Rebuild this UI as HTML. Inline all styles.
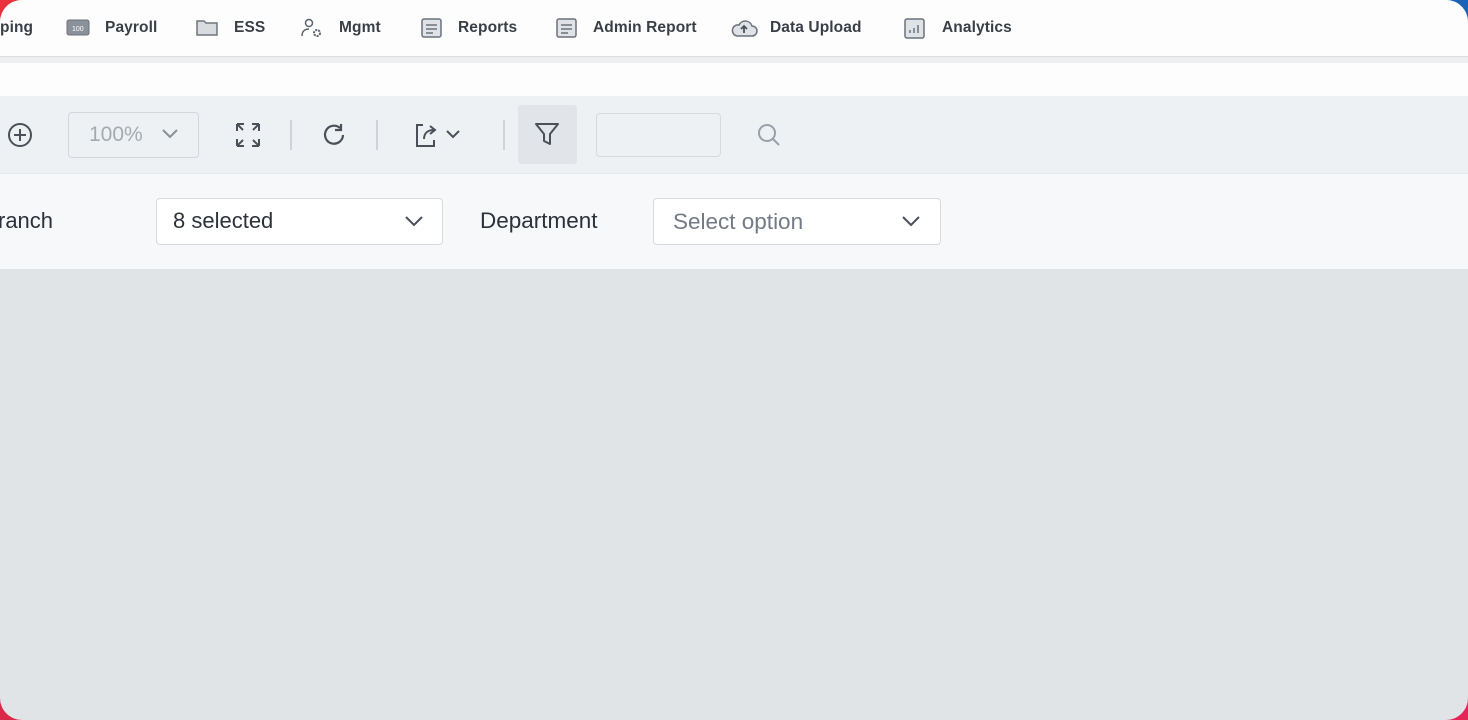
<!DOCTYPE html>
<html><head><style>
body{margin:0;width:1468px;height:720px;overflow:hidden;background:linear-gradient(135deg,#e8303a 0%,#d8204a 50%,#1d5fb0 100%);font-family:"Liberation Sans",sans-serif;}
.win{position:absolute;left:0;top:0;width:1468px;height:720px;border-radius:22px;overflow:hidden;background:#e1e4e7;}
.bgtr{position:absolute;right:0;top:0;width:40px;height:40px;background:#1b63b6}
.bgbr{position:absolute;right:0;bottom:0;width:40px;height:40px;background:#e52458}
.bgtl{position:absolute;left:0;top:0;width:40px;height:40px;background:#e8313a}
.bgbl{position:absolute;left:0;bottom:0;width:40px;height:40px;background:#d92848}
.nav{position:absolute;left:0;top:0;width:1468px;height:56px;background:#fdfdfd;border-bottom:1px solid #dcdee0;box-shadow:0 2px 4px rgba(0,0,0,.06)}
.g{position:absolute;top:57px;height:6px;width:1468px;background:#eeeff0}
.w2{position:absolute;top:63px;height:33px;width:1468px;background:#fdfdfd}
.nv{position:absolute;top:19px;font-size:15.5px;color:#3a3f47;font-weight:bold;letter-spacing:.1px}
.ic{position:absolute;top:17px}
.tb{position:absolute;top:96px;height:77px;width:1468px;background:#eef1f4;border-bottom:1px solid #e6e8eb}
.fr{position:absolute;top:174px;height:95px;width:1468px;background:#f7f8fa}
.box{position:absolute;border:1px solid #d6d9dd;border-radius:4px;background:#fff}
.t{position:absolute;font-size:22px;color:#2d323a}
</style></head><body>
<div class="bgtl"></div><div class="bgtr"></div><div class="bgbr"></div><div class="bgbl"></div>
<div class="win">
<div class="nav">
<span class="nv" style="left:0">ping</span>
<svg class="ic" style="left:66px" width="24" height="20"><rect x="1" y="3" width="22" height="15" rx="2" fill="#8a919b" stroke="#6b727c"/><text x="6" y="14" font-size="7" fill="#fff" font-family="Liberation Sans">100</text></svg>
<span class="nv" style="left:105px">Payroll</span>
<svg class="ic" style="left:195px" width="24" height="20"><path d="M2 4h7l2 2h11v12H2z" fill="#d8dbe0" stroke="#70767f" stroke-width="1.5"/></svg>
<span class="nv" style="left:234px">ESS</span>
<svg class="ic" style="left:300px" width="26" height="22"><circle cx="9" cy="6" r="3.5" fill="none" stroke="#5b626c" stroke-width="1.5"/><path d="M2 19c0-5 3-7 7-7" fill="none" stroke="#5b626c" stroke-width="1.5"/><circle cx="17" cy="16" r="3" fill="none" stroke="#5b626c" stroke-width="2" stroke-dasharray="2 1"/></svg>
<span class="nv" style="left:339px">Mgmt</span>
<svg class="ic" style="left:420px" width="24" height="22"><rect x="2" y="2" width="19" height="18" rx="2" fill="#dfe2e6" stroke="#6b727c" stroke-width="1.5"/><path d="M6 8h11M6 12h11M6 16h7" stroke="#6b727c" stroke-width="1.5"/></svg>
<span class="nv" style="left:458px">Reports</span>
<svg class="ic" style="left:555px" width="24" height="22"><rect x="2" y="2" width="19" height="18" rx="2" fill="#dfe2e6" stroke="#6b727c" stroke-width="1.5"/><path d="M6 8h11M6 12h11M6 16h7" stroke="#6b727c" stroke-width="1.5"/></svg>
<span class="nv" style="left:593px">Admin Report</span>
<svg class="ic" style="left:729px" width="30" height="22"><path d="M8 19h15a5 5 0 0 0 0-10 7 7 0 0 0-13-1 5 5 0 0 0-2 11z" fill="#dfe2e6" stroke="#6b727c" stroke-width="1.5"/><path d="M15 16v-6M12 12l3-3 3 3" stroke="#4b525c" stroke-width="1.8" fill="none"/></svg>
<span class="nv" style="left:770px">Data Upload</span>
<svg class="ic" style="left:903px" width="24" height="22"><rect x="2" y="2" width="19" height="19" rx="2" fill="#dfe2e6" stroke="#6b727c" stroke-width="1.5"/><path d="M7 16v-3M11 16v-5M15 16v-8" stroke="#6b727c" stroke-width="1.5"/></svg>
<span class="nv" style="left:942px">Analytics</span>
</div>
<div class="g"></div><div class="w2"></div>
<div class="tb">
<svg style="position:absolute;left:6px;top:25px" width="28" height="28"><circle cx="14" cy="14" r="11" fill="none" stroke="#4b5058" stroke-width="2"/><path d="M14 8v12M8 14h12" stroke="#4b5058" stroke-width="2"/></svg>
<div class="box" style="left:68px;top:16px;width:129px;height:44px;background:#eef1f4;border-color:#d3d7dc"></div>
<span class="t" style="left:89px;top:27px;color:#a5aab1;font-size:21px">100%</span>
<svg style="position:absolute;left:161px;top:31px" width="18" height="12"><path d="M2 3l7 7 7-7" fill="none" stroke="#8a9098" stroke-width="2"/></svg>
<svg style="position:absolute;left:234px;top:25px" width="28" height="28"><path d="M3 3h7M3 3v7M3 3l6 6M25 3h-7M25 3v7M25 3l-6 6M3 25h7M3 25v-7M3 25l6-6M25 25h-7M25 25v-7M25 25l-6-6" stroke="#4b5058" stroke-width="2" fill="none"/></svg>
<div style="position:absolute;left:290px;top:24px;width:2px;height:30px;background:#cfd3d8"></div>
<svg style="position:absolute;left:320px;top:25px" width="28" height="28"><path d="M23 14a9 9 0 1 1-3-7" fill="none" stroke="#4b5058" stroke-width="2.2"/><path d="M21 3v6h-6" fill="none" stroke="#4b5058" stroke-width="2.2"/></svg>
<div style="position:absolute;left:376px;top:24px;width:2px;height:30px;background:#cfd3d8"></div>
<svg style="position:absolute;left:413px;top:24px" width="52" height="30"><path d="M10 5H4v21h17v-6" fill="none" stroke="#4b5058" stroke-width="2"/><path d="M11 19c0-6 4-9 10-9M17 6l5 4-5 4" fill="none" stroke="#4b5058" stroke-width="2"/><path d="M34 11l6 6 6-6" fill="none" stroke="#4b5058" stroke-width="2"/></svg>
<div style="position:absolute;left:503px;top:24px;width:2px;height:30px;background:#cfd3d8"></div>
<div style="position:absolute;left:518px;top:9px;width:59px;height:59px;background:#e1e4e8;border-radius:3px"></div>
<svg style="position:absolute;left:533px;top:25px" width="28" height="26"><path d="M3 3h22l-8 10v10l-6-3v-7z" fill="none" stroke="#4b5058" stroke-width="2" stroke-linejoin="round"/></svg>
<div class="box" style="left:596px;top:17px;width:123px;height:42px;background:#eef1f4"></div>
<svg style="position:absolute;left:755px;top:25px" width="28" height="28"><circle cx="12" cy="12" r="8" fill="none" stroke="#9aa0a8" stroke-width="2"/><path d="M18 18l6 6" stroke="#9aa0a8" stroke-width="2"/></svg>
</div>
<div class="fr">
<span class="t" style="left:-2px;top:34px">ranch</span>
<div class="box" style="left:156px;top:24px;width:285px;height:45px"></div>
<span class="t" style="left:173px;top:34px">8 selected</span>
<svg style="position:absolute;left:404px;top:40px" width="20" height="14"><path d="M2 3l8 8 8-8" fill="none" stroke="#4b5058" stroke-width="2"/></svg>
<span class="t" style="left:480px;top:34px;font-size:22.5px">Department</span>
<div class="box" style="left:653px;top:24px;width:286px;height:45px"></div>
<span class="t" style="left:673px;top:35px;color:#737a83;font-size:22.5px">Select option</span>
<svg style="position:absolute;left:901px;top:40px" width="20" height="14"><path d="M2 3l8 8 8-8" fill="none" stroke="#4b5058" stroke-width="2"/></svg>
</div>
</div>
</body></html>
